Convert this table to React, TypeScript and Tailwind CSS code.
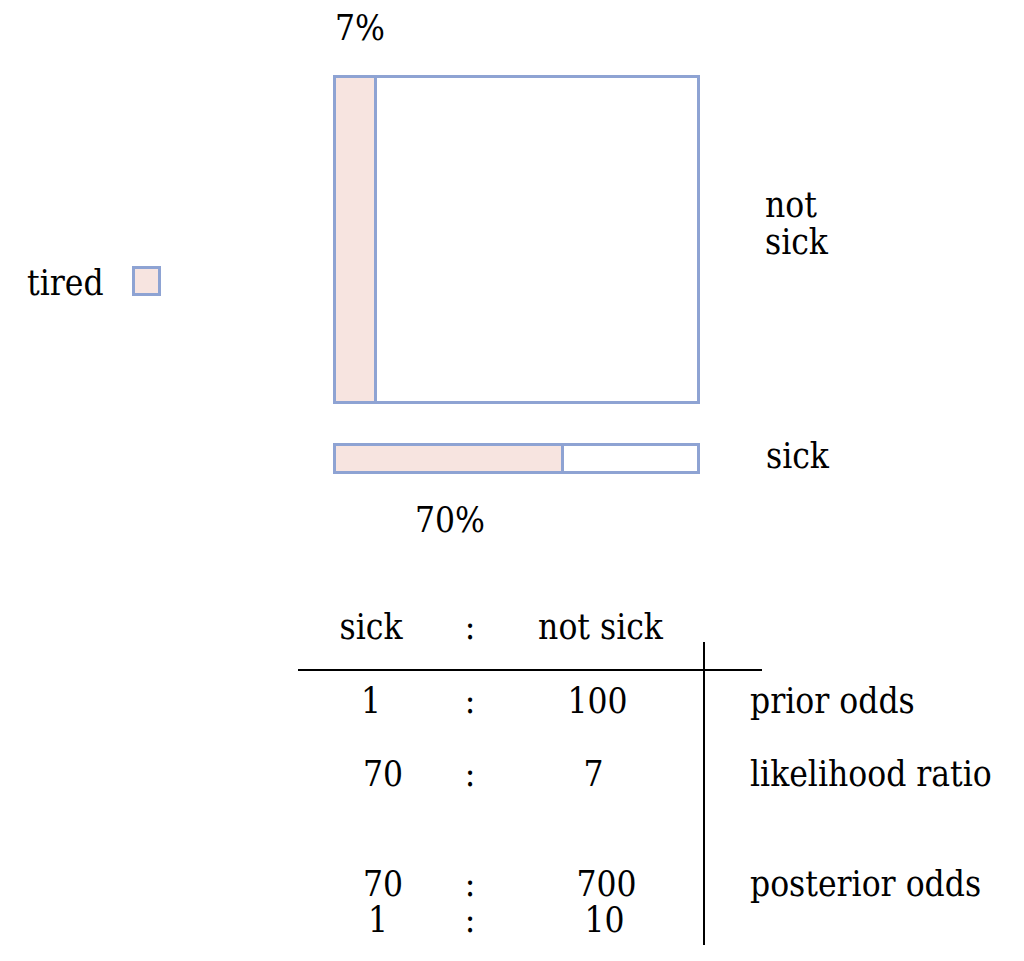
import React from "react";

const font = "font-['DejaVu_Serif_Condensed','DejaVu_Serif',serif] [font-stretch:condensed]";
const txt = "text-[35px] leading-[36px] text-black whitespace-nowrap";

type RowProps = {
  a?: string;
  b?: string;
  c?: string;
  label?: string;
  rowCls?: string;
  pad?: string;
  aCls?: string;
  cCls?: string;
  line?: boolean;
};

const OddsRow = ({ a, b, c, label, rowCls = "", pad = "", aCls = "", cCls = "", line = true }: RowProps) => (
  <div className={`grid grid-cols-[150px_44px_211px_2px_1fr] ${rowCls}`}>
    <div className={`text-center ${txt} ${pad} ${aCls}`}>{a}</div>
    <div className={`text-center ${txt} ${pad}`}>{b}</div>
    <div className={`text-center ${txt} ${pad} ${cCls}`}>{c}</div>
    <div className={line ? "bg-black" : ""} />
    <div className={`pl-[45px] ${txt} ${pad}`}>{label}</div>
  </div>
);

export default function App() {
  return (
    <div className={`w-[1024px] h-[961px] bg-white overflow-hidden ${font}`}>
      {/* area diagram */}
      <div className="grid grid-cols-[333px_367px_1fr]">
        {/* row: 7% label */}
        <div className="h-[75px]" />
        <div className={`pt-[10px] pl-[2px] ${txt}`}>7%</div>
        <div />

        {/* row: big square */}
        <div className="pt-[190px] pl-[27px]">
          <div className="flex items-start gap-[28px]">
            <span className={txt}>tired</span>
            <div className="mt-[1px] w-[29px] h-[30px] border-[3px] border-[#8ea3d3] bg-[#f7e4e0]" />
          </div>
        </div>
        <div className="h-[329px] border-[3px] border-[#8ea3d3] flex">
          <div className="w-[41px] bg-[#f7e4e0] border-r-[3px] border-[#8ea3d3]" />
        </div>
        <div className={`pt-[112px] pl-[65px] ${txt} leading-[37px]`}>
          not
          <br />
          sick
        </div>

        {/* spacer */}
        <div className="col-span-3 h-[39px]" />

        {/* row: sick bar */}
        <div />
        <div className="h-[31px] border-[3px] border-[#8ea3d3] flex">
          <div className="w-[228px] bg-[#f7e4e0] border-r-[3px] border-[#8ea3d3]" />
        </div>
        <div className={`-mt-[5px] pl-[66px] ${txt}`}>sick</div>

        {/* row: 70% label */}
        <div />
        <div className={`pt-[28px] pl-[82px] ${txt}`}>70%</div>
        <div />
      </div>

      {/* odds table */}
      <div className="mt-[71px] ml-[298px]">
        <OddsRow a="sick" b=":" c="not sick" rowCls="h-[33px]" aCls="pr-[4px]" cCls="pl-[6px]" line={false} />
        <OddsRow rowCls="h-[27px]" />
        <div className="w-[464px] h-[2px] bg-black" />
        <OddsRow a="1" b=":" c="100" label="prior odds" rowCls="h-[85px]" pad="pt-[12px]" aCls="pr-[4px]" />
        <OddsRow a="70" b=":" c="7" label="likelihood ratio" rowCls="h-[110px]" aCls="pl-[20px]" cCls="pr-[8px]" />
        <OddsRow a="70" b=":" c="700" label="posterior odds" rowCls="h-[36px]" aCls="pl-[20px]" cCls="pl-[18px]" />
        <OddsRow a="1" b=":" c="10" rowCls="h-[43px]" aCls="pl-[10px]" cCls="pl-[14px]" />
      </div>
    </div>
  );
}
